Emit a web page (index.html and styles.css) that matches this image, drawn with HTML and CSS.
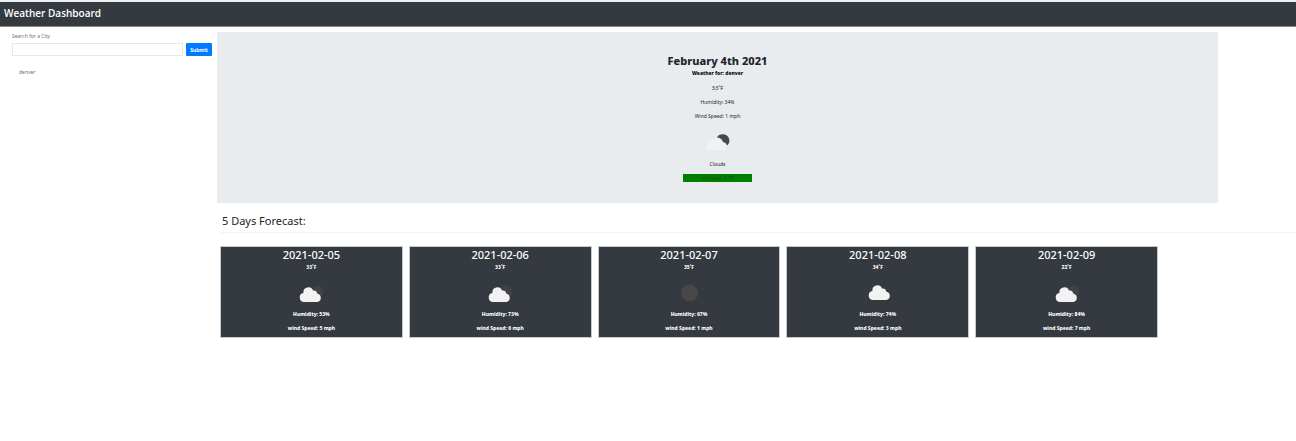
FILE: index.html
```html
<!DOCTYPE html>
<html lang="en">
<head>
<meta charset="utf-8">
<title>Weather Dashboard</title>
<link rel="stylesheet" href="styles.css">
</head>
<body>
<svg class="sprite" aria-hidden="true">
  <symbol id="cloud" viewBox="0 0 26 18">
    <path d="M5 17a4.600 4.600 0 0 1-.6-9.100A5 5 0 0 1 14 5.500a4 4 0 0 1 4.400 3.300A4.200 4.200 0 0 1 18.600 17z"/>
  </symbol>
</svg>
<header class="topbar"><h1 class="brand">Weather Dashboard</h1></header>
<div class="layout">
  <aside class="sidebar">
    <form class="search">
      <label class="search-label" for="city">Search for a City</label>
      <div class="search-row">
        <input class="search-input" id="city" type="text">
        <button class="search-button" type="button">Submit</button>
      </div>
    </form>
    <ul class="history"><li>denver</li></ul>
  </aside>
  <main class="main">
    <section class="current">
      <h2 class="current-date">February 4th 2021</h2>
      <p class="current-city">Weather for: denver</p>
      <p class="current-temp">33˚F</p>
      <p class="current-line">Humidity: 34%</p>
      <p class="current-line">Wind Speed: 1 mph</p>
      <svg class="current-icon" viewBox="0 0 26 18" aria-hidden="true">
        <path class="moon" d="M12 4.500C13 2 15.500 1 18 1.200c4.500.2 7 4 6.300 7.500-.3 1.600-1 2.800-2.300 3.800-.5-2-1.800-3.200-4-3.500-.8-2.800-3-4.500-6-4.500z"/>
        <path class="pale-cloud" d="M5 17a3.800 3.800 0 0 1-.5-7.500A4.500 4.500 0 0 1 8 6.500 5.500 5.500 0 0 1 16 9a3.500 3.500 0 0 1 3.500 2.500A3 3 0 0 1 19.500 17z"/>
      </svg>
      <p class="current-sky">Clouds</p>
      <p class="uv">uv Index: 2.15</p>
    </section>
    <h2 class="forecast-title">5 Days Forecast:</h2>
    <section class="forecast">
      <article class="card">
        <h3 class="card-date">2021-02-05</h3>
        <p class="card-temp">33˚F</p>
        <svg class="card-icon" viewBox="-1 -1 26 18" aria-hidden="true"><circle class="shade" cx="18.500" cy="6.500" r="6"/><use class="cloud" href="#cloud" width="26" height="18"/></svg>
        <p class="card-line">Humidity: 53%</p>
        <p class="card-line">wind Speed: 5 mph</p>
      </article>
      <article class="card">
        <h3 class="card-date">2021-02-06</h3>
        <p class="card-temp">33˚F</p>
        <svg class="card-icon" viewBox="-1 -1 26 18" aria-hidden="true"><circle class="shade" cx="18.500" cy="6.500" r="6"/><use class="cloud" href="#cloud" width="26" height="18"/></svg>
        <p class="card-line">Humidity: 73%</p>
        <p class="card-line">wind Speed: 6 mph</p>
      </article>
      <article class="card">
        <h3 class="card-date">2021-02-07</h3>
        <p class="card-temp">35˚F</p>
        <svg class="card-icon" viewBox="0 0 26 18" aria-hidden="true"><circle class="night" cx="13.500" cy="9" r="8.500"/></svg>
        <p class="card-line">Humidity: 67%</p>
        <p class="card-line">wind Speed: 1 mph</p>
      </article>
      <article class="card">
        <h3 class="card-date">2021-02-08</h3>
        <p class="card-temp">34˚F</p>
        <svg class="card-icon" viewBox="-3 1 26 18" aria-hidden="true"><use class="cloud" href="#cloud" width="26" height="18"/></svg>
        <p class="card-line">Humidity: 74%</p>
        <p class="card-line">wind Speed: 3 mph</p>
      </article>
      <article class="card">
        <h3 class="card-date">2021-02-09</h3>
        <p class="card-temp">22˚F</p>
        <svg class="card-icon" viewBox="-1 -1 26 18" aria-hidden="true"><circle class="shade" cx="18.500" cy="6.500" r="6"/><use class="cloud" href="#cloud" width="26" height="18"/></svg>
        <p class="card-line">Humidity: 84%</p>
        <p class="card-line">wind Speed: 7 mph</p>
      </article>
    </section>
  </main>
</div>
</body>
</html>
```
FILE: styles.css
```css
* { box-sizing: border-box; }
body {
  margin: 0;
  background: #fff;
  color: #212529;
  font-family: "Noto Sans", "Open Sans", sans-serif;
  font-size: 5px;
  line-height: 8px;
}
h1, h2, h3, p, ul { margin: 0; padding: 0; }
.sprite { display: none; }
.topbar {
  padding: 2px 4px 4px;
  border-top: 2px solid #eef1f3;
  border-bottom: 1px solid #85898d;
  background: #343a40;
}
.brand { color: #fff; font-family: "Open Sans", sans-serif; font-size: 10px; font-weight: 600; line-height: 18px; }
.layout { display: flex; padding-top: 5px; }
.sidebar { flex: 0 0 217px; padding: 0 5px 0 12px; }
.search-label { display: block; color: #6c757d; }
.search-row { display: flex; gap: 3px; margin-top: 3px; }
.search-input {
  flex: 1;
  min-width: 0;
  height: 13px;
  padding: 0 4px;
  border: 1px solid #e6e9ec;
  font: inherit;
}
.search-button {
  width: 26px;
  height: 13px;
  padding: 0;
  border: 0;
  border-radius: 1px;
  background: #007bff;
  color: #fff;
  font: inherit;
  font-weight: 700;
}
.history { padding: 12px 7px; color: #6c757d; list-style: none; }
.main { flex: 1; min-width: 0; }
.current {
  display: flex;
  flex-direction: column;
  align-items: center;
  margin-right: 78px;
  padding: 21px 0;
  background: #e9ecef;
}
.current-date { font-size: 11px; font-weight: 800; line-height: 16px; }
.current-city { color: #000; font-weight: 800; }
.current-temp { margin-top: 7px; font-size: 6px; }
.current-line { margin-top: 6px; }
.current-icon { width: 26px; height: 18px; margin-top: 13px; }
.current-sky { margin-top: 9px; }
.uv { width: 69px; margin-top: 6px; background: #008000; color: #124d14; text-align: center; }
.moon { fill: #48484a; }
.pale-cloud { fill: #f2f2f2; }
.forecast-title {
  margin-left: 4px;
  padding: 8px 1px 2px;
  border-bottom: 1px solid #f2f2f3;
  font-size: 11px;
  font-weight: 400;
  line-height: 19px;
}
.forecast {
  display: grid;
  grid-template-columns: repeat(5, 1fr);
  gap: 6px;
  margin: 13px 138px 0 3px;
}
.card {
  display: flex;
  flex-direction: column;
  align-items: center;
  padding-bottom: 5px;
  border: 1px solid #c6c9cc;
  background: #343a40;
  color: #fff;
  font-weight: 800;
}
.card-date { font-size: 11px; font-weight: 500; line-height: 15px; }
.card-temp { margin-top: 1px; }
.card-icon { width: 26px; height: 18px; margin: 13px 0 8px; }
.card-line + .card-line { margin-top: 6px; }
.cloud { fill: #f2f2f2; }
.shade { fill: #404245; }
.night { fill: #484848; }
```
